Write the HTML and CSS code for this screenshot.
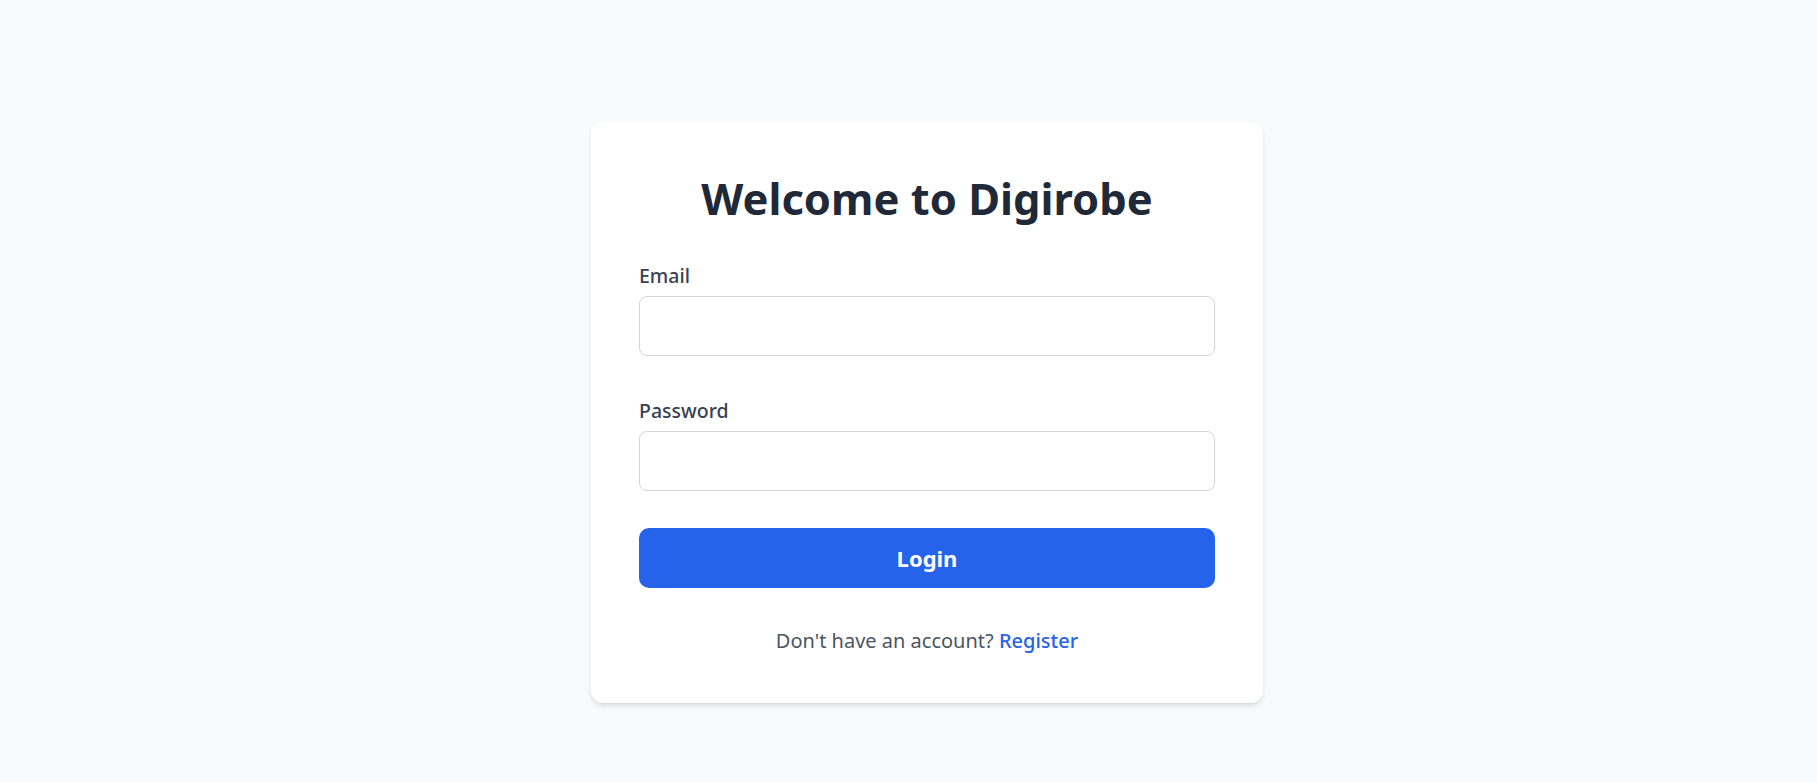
FILE: index.html
```html
<!DOCTYPE html>
<html lang="en">
<head>
<meta charset="utf-8">
<title>Digirobe - Login</title>
<link rel="stylesheet" href="styles.css">
</head>
<body>
  <main class="page">
    <div class="card">
      <h1 class="title">Welcome to Digirobe</h1>
      <form class="form">
        <div class="field">
          <label class="label" for="email">Email</label>
          <input class="input" id="email" type="email">
        </div>
        <div class="field">
          <label class="label" for="password">Password</label>
          <input class="input" id="password" type="password">
        </div>
        <button class="button" type="button">Login</button>
      </form>
      <p class="footer">Don't have an account? <a class="link" href="#">Register</a></p>
    </div>
  </main>
</body>
</html>
```

FILE: styles.css
```css
* { box-sizing: border-box; }
html, body { margin: 0; padding: 0; }
body {
  background: #f9fafb;
  font-family: "Noto Sans", "Open Sans", sans-serif;
  color: #1f2937;
}
.page {
  min-height: 782px;
  display: flex;
  justify-content: center;
  align-items: flex-start;
  padding: 122px 0 0 37px;
}
.card {
  width: 672px;
  background: #ffffff;
  border-radius: 12px;
  padding: 48px;
  box-shadow: 0 4px 6px -1px rgba(0,0,0,0.1), 0 2px 4px -2px rgba(0,0,0,0.1);
}
.title {
  margin: 0;
  font-size: 43.5px;
  line-height: 56px;
  font-weight: 700;
  text-align: center;
  color: #1f2937;
}
.form {
  display: flex;
  flex-direction: column;
  margin-top: 36px;
}
.field {
  display: flex;
  flex-direction: column;
  gap: 6px;
  margin-bottom: 41px;
}
.field + .field { margin-bottom: 37px; }
.label {
  font-size: 19.5px;
  line-height: 28px;
  font-weight: 500;
  color: #374151;
}
.input {
  height: 60px;
  width: 100%;
  border: 1px solid #d1d5db;
  border-radius: 8px;
  background: #fff;
  font: inherit;
  padding: 0 16px;
}
.button {
  height: 60px;
  width: 100%;
  border: 0;
  border-radius: 10px;
  background: #2563eb;
  color: #fff;
  font-family: inherit;
  font-size: 22px;
  font-weight: 700;
}
.footer {
  margin: 39px 0 0;
  text-align: center;
  font-size: 20px;
  line-height: 28px;
  color: #4b5563;
}
.link {
  color: #2563eb;
  font-weight: 500;
  text-decoration: none;
}
```
